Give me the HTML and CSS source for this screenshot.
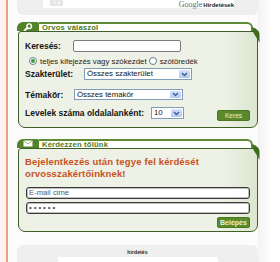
FILE: index.html
```html
<!DOCTYPE html>
<html lang="hu">
<head>
<meta charset="utf-8">
<title>Orvos válaszol</title>
<link rel="stylesheet" href="styles.css">
</head>
<body>
<div class="page">
  <div class="edge"></div>
  <div class="rule"></div>
  <main class="col">
    <div class="ad-top">
      <div class="ad-frame">
        <span class="ad-nav">‹ ›</span>
        <span class="ad-brand"><span class="g-logo">Google</span><span class="g-label">Hirdetések</span></span>
      </div>
    </div>

    <section class="panel">
      <div class="panel-head">
        <span class="tab">
          <svg width="10" height="8" viewBox="0 0 10 8"><circle cx="6.2" cy="3.2" r="2.3" fill="none" stroke="#fff" stroke-width="1.4"/><path d="M4.4 5 L1.6 7.4" stroke="#fff" stroke-width="2" stroke-linecap="round"/></svg>
        </span>
        <span class="title">Orvos válaszol</span>
      </div>
      <div class="panel-body search">
        <div class="row r1"><span class="lbl w48">Keresés:</span><span class="field w108"></span></div>
        <div class="row r2"><span class="radio on"></span><span class="opt">teljes kifejezés vagy szókezdet</span><span class="radio r-b"></span><span class="opt">szótöredék</span></div>
        <div class="row r3"><span class="lbl w59">Szakterület:</span><span class="select w108"><span class="sel-text">Összes szakterület</span><span class="sel-btn"><svg width="7" height="5" viewBox="0 0 7 5"><path d="M1 1 L3.5 3.5 L6 1" fill="none" stroke="#3f5f9a" stroke-width="1.5"/></svg></span></span></div>
        <div class="row r4"><span class="lbl w49">Témakör:</span><span class="select w109 h11"><span class="sel-text">Összes témakör</span><span class="sel-btn"><svg width="7" height="5" viewBox="0 0 7 5"><path d="M1 1 L3.5 3.5 L6 1" fill="none" stroke="#3f5f9a" stroke-width="1.5"/></svg></span></span></div>
        <div class="row r5"><span class="lbl w126">Levelek száma oldalalanként:</span><span class="select w33"><span class="sel-text">10</span><span class="sel-btn"><svg width="7" height="5" viewBox="0 0 7 5"><path d="M1 1 L3.5 3.5 L6 1" fill="none" stroke="#3f5f9a" stroke-width="1.5"/></svg></span></span><span class="btn keres">Keres</span></div>
      </div>
      <svg class="curl" width="8" height="16" viewBox="0 0 8 16"><path d="M0 0 C3 1 7 3 7.5 7 L7.5 16 C6 12 3 9 1.5 6 C0.8 4 0.4 2 0 0 Z" fill="#3f6b1c"/></svg>
    </section>

    <section class="panel p2">
      <div class="panel-head">
        <span class="tab">
          <svg width="10" height="7" viewBox="0 0 10 7"><rect x="0.5" y="0.5" width="9" height="6" fill="#fff"/><path d="M0.8 0.8 L5 4 L9.2 0.8" fill="none" stroke="#7fa05a" stroke-width="0.8"/></svg>
        </span>
        <span class="title">Kérdezzen tőlünk</span>
      </div>
      <div class="panel-body ask">
        <p class="notice">Bejelentkezés után tegye fel kérdését orvosszakértőinknek!</p>
        <div class="inp email">E-mail cime</div>
        <div class="inp pass">••••••</div>
        <div class="btn-row"><span class="btn belepes">Belépés</span></div>
      </div>
      <svg class="curl" width="8" height="16" viewBox="0 0 8 16"><path d="M0 0 C3 1 7 3 7.5 7 L7.5 16 C6 12 3 9 1.5 6 C0.8 4 0.4 2 0 0 Z" fill="#3f6b1c"/></svg>
    </section>

    <div class="ad-bottom">
      <div class="ad-caption">hirdetés</div>
      <div class="ad-slot"></div>
    </div>
  </main>
  <div class="side"></div>
</div>
</body>
</html>
```

FILE: styles.css
```css
* { box-sizing: border-box; margin: 0; padding: 0; }
html, body { width: 280px; height: 262px; overflow: hidden; }
body { background: #fcfcfc; font-family: "Liberation Sans", Arial, sans-serif; color: #111; }

.page { display: flex; height: 262px; }
.edge { width: 6px; background: #fcf4ef; }
.rule { width: 2px; background: #e8a183; }
.col { width: 241px; margin-left: 9px; display: flex; flex-direction: column; }
.side { flex: 1; background: linear-gradient(to right, #f3f3f3, #ffffff 60%); }

/* top ad strip */
.ad-top { height: 15px; background: #eeeeee; border-radius: 0 0 6px 6px; padding-left: 26px; }
.ad-frame { width: 191px; height: 8px; background: #fff; display: flex; justify-content: space-between; align-items: flex-start; padding-left: 7px; }
.ad-nav { width: 13px; height: 6px; background: #e6e6e6; color: #fff; font-size: 7px; line-height: 5px; text-align: center; font-weight: bold; }
.ad-brand { display: flex; align-items: baseline; gap: 1px; line-height: 9px; height: 9px; }
.g-logo { font-family: "Liberation Serif", serif; font-size: 8px; color: #6b6b6b; letter-spacing: 0; }
.g-label { font-size: 6px; font-weight: bold; color: #222; }

/* panels */
.panel { position: relative; margin-top: 7px; }
.p2 { margin-top: 11px; }
.panel-head { display: flex; width: 236px; height: 9px; }
.tab { width: 22px; background: #52822a; border-radius: 6px 2px 0 0; display: flex; align-items: center; justify-content: center; }
.title { flex: 1; background: #fff; border-top: 2px solid #5e8b34; border-right: 2px solid #5e8b34; border-radius: 0 6px 0 0; font-weight: bold; font-size: 7.6px; line-height: 7px; color: #4b7a21; padding-left: 3px; letter-spacing: 0.2px; }
.panel-body { margin-left: 1px; border: 1px solid #3f5e27; border-radius: 3px 3px 7px 7px; background: linear-gradient(to right, #edf1e6 86%, #dce6d0); }
.curl { position: absolute; left: 235px; top: 5px; }

/* search form */
.search { padding: 8px 7px 6px 6px; }
.row { display: flex; align-items: center; }
.r1 { height: 12px; }
.r2 { height: 10px; margin-top: 4px; padding-left: 4px; }
.r3 { height: 12px; margin-top: 2px; }
.r4 { height: 11px; margin-top: 9px; }
.r5 { height: 14px; margin-top: 7px; align-items: flex-start; }
.r5 .lbl { height: 12px; display: flex; align-items: center; }

.lbl { font-weight: bold; font-size: 8.5px; color: #151515; white-space: nowrap; }
.w48 { width: 48px; }
.w59 { width: 59px; }
.w49 { width: 49px; }
.w126 { width: 126px; }

.field { height: 12px; background: #fff; border: 1px solid #7a7a7a; border-radius: 2px; }
.w108 { width: 108px; }
.w109 { width: 109px; }
.w33 { width: 33px; }

.radio { flex: none; width: 8px; height: 8px; border-radius: 50%; border: 1px solid #6f7f8c; background: #fff; display: flex; align-items: center; justify-content: center; }
.radio.on::after { content: ""; width: 4px; height: 4px; border-radius: 50%; background: #3a9a3a; }
.r-b { margin-left: 2px; }
.opt { font-size: 7.8px; color: #1e1e1e; margin-left: 3px; white-space: nowrap; }

.select { height: 12px; background: #fff; border: 1px solid #7f9db9; display: flex; align-items: stretch; }
.h11 { height: 11px; }
.sel-text { flex: 1; font-size: 7.8px; line-height: 10px; padding-left: 2px; color: #111; white-space: nowrap; overflow: hidden; }
.sel-btn { width: 11px; margin: 1px; background: linear-gradient(#d7e2fb, #b6c8ef); border-radius: 1px; display: flex; align-items: center; justify-content: center; }

.btn { display: block; background: #5a8a2b; border: 1px solid #4b7622; border-radius: 2px; color: #e8f0dc; text-align: center; width: 33px; }
.keres { height: 11px; margin-top: 3px; margin-left: auto; font-size: 6.6px; line-height: 9px; }

/* ask form */
.ask { padding: 7px 7px 3px 6px; }
.notice { font-weight: bold; font-size: 9.5px; line-height: 12px; color: #c9511d; letter-spacing: 0.15px; }
.inp { height: 12px; margin-left: 1px; background: #fff; border: 1px solid #3a3a3a; border-radius: 3px; box-shadow: inset 0 0 0 1px rgba(70,70,70,0.35); padding-left: 2px; font-size: 7.7px; line-height: 10px; color: #5a5a5a; white-space: nowrap; }
.email { margin-top: 7px; }
.pass { margin-top: 3px; font-size: 8px; letter-spacing: 1.9px; color: #505050; }
.btn-row { display: flex; justify-content: flex-end; margin-top: 3px; }
.belepes { height: 11px; font-size: 7px; line-height: 9px; font-weight: bold; }

/* bottom ad */
.ad-bottom { margin-top: 13px; flex: 1; background: #efefef; border-radius: 6px 6px 0 0; padding-top: 4px; display: flex; flex-direction: column; align-items: center; }
.ad-caption { font-size: 5px; line-height: 6px; font-weight: bold; color: #222; letter-spacing: 0.1px; }
.ad-slot { width: 160px; flex: 1; margin-top: 2px; background: #fff; }
```
